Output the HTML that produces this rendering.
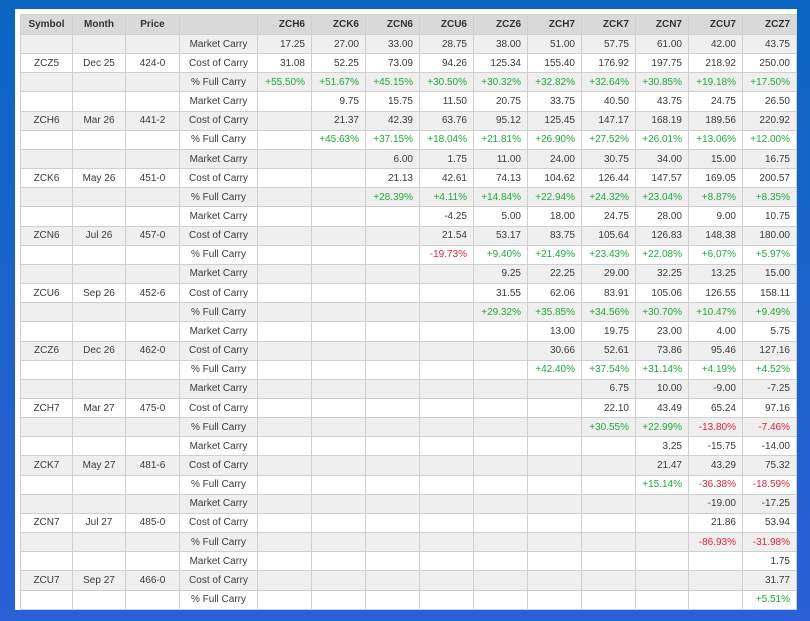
<!DOCTYPE html>
<html><head><meta charset="utf-8"><style>
html,body{margin:0;padding:0;width:810px;height:621px;overflow:hidden;background:linear-gradient(180deg,#0a66c2 0%,#1f62cc 60%,#2a5fd6 100%);font-family:"Liberation Sans",sans-serif;}
.panel{position:absolute;left:15px;top:9px;width:782px;height:601px;background:#fff;overflow:hidden;}
table{position:absolute;left:5px;top:5px;border-collapse:collapse;table-layout:fixed;font-size:10px;color:#3a3a3a;}
td,th{border:1px solid #cfcfcf;height:18.17px;padding:0 6px 0 0;text-align:right;white-space:nowrap;overflow:hidden;}
th{background:#d9d9d9;font-weight:bold;height:19px;color:#333;}
th.c,td.c{text-align:center;padding:0;}
tr:nth-child(even) td{background:#efefef;}
tr:nth-child(odd) td{background:#fff;}
.g{color:#1faa3a}.r{color:#e0233a}
</style></head><body><div class="panel"><table>
<colgroup><col style="width:52px"><col style="width:53px"><col style="width:54px"><col style="width:78px"><col style="width:54px"><col style="width:54px"><col style="width:54px"><col style="width:54px"><col style="width:54px"><col style="width:54px"><col style="width:54px"><col style="width:53px"><col style="width:54px"><col style="width:54px"></colgroup>
<tr><th class="c">Symbol</th><th class="c">Month</th><th class="c">Price</th><th></th><th>ZCH6</th><th>ZCK6</th><th>ZCN6</th><th>ZCU6</th><th>ZCZ6</th><th>ZCH7</th><th>ZCK7</th><th>ZCN7</th><th>ZCU7</th><th>ZCZ7</th></tr>
<tr><td></td><td></td><td></td><td class="c">Market Carry</td><td>17.25</td><td>27.00</td><td>33.00</td><td>28.75</td><td>38.00</td><td>51.00</td><td>57.75</td><td>61.00</td><td>42.00</td><td>43.75</td></tr>
<tr><td class="c">ZCZ5</td><td class="c">Dec 25</td><td class="c">424-0</td><td class="c">Cost of Carry</td><td>31.08</td><td>52.25</td><td>73.09</td><td>94.26</td><td>125.34</td><td>155.40</td><td>176.92</td><td>197.75</td><td>218.92</td><td>250.00</td></tr>
<tr><td></td><td></td><td></td><td class="c">% Full Carry</td><td class="g">+55.50%</td><td class="g">+51.67%</td><td class="g">+45.15%</td><td class="g">+30.50%</td><td class="g">+30.32%</td><td class="g">+32.82%</td><td class="g">+32.64%</td><td class="g">+30.85%</td><td class="g">+19.18%</td><td class="g">+17.50%</td></tr>
<tr><td></td><td></td><td></td><td class="c">Market Carry</td><td></td><td>9.75</td><td>15.75</td><td>11.50</td><td>20.75</td><td>33.75</td><td>40.50</td><td>43.75</td><td>24.75</td><td>26.50</td></tr>
<tr><td class="c">ZCH6</td><td class="c">Mar 26</td><td class="c">441-2</td><td class="c">Cost of Carry</td><td></td><td>21.37</td><td>42.39</td><td>63.76</td><td>95.12</td><td>125.45</td><td>147.17</td><td>168.19</td><td>189.56</td><td>220.92</td></tr>
<tr><td></td><td></td><td></td><td class="c">% Full Carry</td><td></td><td class="g">+45.63%</td><td class="g">+37.15%</td><td class="g">+18.04%</td><td class="g">+21.81%</td><td class="g">+26.90%</td><td class="g">+27.52%</td><td class="g">+26.01%</td><td class="g">+13.06%</td><td class="g">+12.00%</td></tr>
<tr><td></td><td></td><td></td><td class="c">Market Carry</td><td></td><td></td><td>6.00</td><td>1.75</td><td>11.00</td><td>24.00</td><td>30.75</td><td>34.00</td><td>15.00</td><td>16.75</td></tr>
<tr><td class="c">ZCK6</td><td class="c">May 26</td><td class="c">451-0</td><td class="c">Cost of Carry</td><td></td><td></td><td>21.13</td><td>42.61</td><td>74.13</td><td>104.62</td><td>126.44</td><td>147.57</td><td>169.05</td><td>200.57</td></tr>
<tr><td></td><td></td><td></td><td class="c">% Full Carry</td><td></td><td></td><td class="g">+28.39%</td><td class="g">+4.11%</td><td class="g">+14.84%</td><td class="g">+22.94%</td><td class="g">+24.32%</td><td class="g">+23.04%</td><td class="g">+8.87%</td><td class="g">+8.35%</td></tr>
<tr><td></td><td></td><td></td><td class="c">Market Carry</td><td></td><td></td><td></td><td>-4.25</td><td>5.00</td><td>18.00</td><td>24.75</td><td>28.00</td><td>9.00</td><td>10.75</td></tr>
<tr><td class="c">ZCN6</td><td class="c">Jul 26</td><td class="c">457-0</td><td class="c">Cost of Carry</td><td></td><td></td><td></td><td>21.54</td><td>53.17</td><td>83.75</td><td>105.64</td><td>126.83</td><td>148.38</td><td>180.00</td></tr>
<tr><td></td><td></td><td></td><td class="c">% Full Carry</td><td></td><td></td><td></td><td class="r">-19.73%</td><td class="g">+9.40%</td><td class="g">+21.49%</td><td class="g">+23.43%</td><td class="g">+22.08%</td><td class="g">+6.07%</td><td class="g">+5.97%</td></tr>
<tr><td></td><td></td><td></td><td class="c">Market Carry</td><td></td><td></td><td></td><td></td><td>9.25</td><td>22.25</td><td>29.00</td><td>32.25</td><td>13.25</td><td>15.00</td></tr>
<tr><td class="c">ZCU6</td><td class="c">Sep 26</td><td class="c">452-6</td><td class="c">Cost of Carry</td><td></td><td></td><td></td><td></td><td>31.55</td><td>62.06</td><td>83.91</td><td>105.06</td><td>126.55</td><td>158.11</td></tr>
<tr><td></td><td></td><td></td><td class="c">% Full Carry</td><td></td><td></td><td></td><td></td><td class="g">+29.32%</td><td class="g">+35.85%</td><td class="g">+34.56%</td><td class="g">+30.70%</td><td class="g">+10.47%</td><td class="g">+9.49%</td></tr>
<tr><td></td><td></td><td></td><td class="c">Market Carry</td><td></td><td></td><td></td><td></td><td></td><td>13.00</td><td>19.75</td><td>23.00</td><td>4.00</td><td>5.75</td></tr>
<tr><td class="c">ZCZ6</td><td class="c">Dec 26</td><td class="c">462-0</td><td class="c">Cost of Carry</td><td></td><td></td><td></td><td></td><td></td><td>30.66</td><td>52.61</td><td>73.86</td><td>95.46</td><td>127.16</td></tr>
<tr><td></td><td></td><td></td><td class="c">% Full Carry</td><td></td><td></td><td></td><td></td><td></td><td class="g">+42.40%</td><td class="g">+37.54%</td><td class="g">+31.14%</td><td class="g">+4.19%</td><td class="g">+4.52%</td></tr>
<tr><td></td><td></td><td></td><td class="c">Market Carry</td><td></td><td></td><td></td><td></td><td></td><td></td><td>6.75</td><td>10.00</td><td>-9.00</td><td>-7.25</td></tr>
<tr><td class="c">ZCH7</td><td class="c">Mar 27</td><td class="c">475-0</td><td class="c">Cost of Carry</td><td></td><td></td><td></td><td></td><td></td><td></td><td>22.10</td><td>43.49</td><td>65.24</td><td>97.16</td></tr>
<tr><td></td><td></td><td></td><td class="c">% Full Carry</td><td></td><td></td><td></td><td></td><td></td><td></td><td class="g">+30.55%</td><td class="g">+22.99%</td><td class="r">-13.80%</td><td class="r">-7.46%</td></tr>
<tr><td></td><td></td><td></td><td class="c">Market Carry</td><td></td><td></td><td></td><td></td><td></td><td></td><td></td><td>3.25</td><td>-15.75</td><td>-14.00</td></tr>
<tr><td class="c">ZCK7</td><td class="c">May 27</td><td class="c">481-6</td><td class="c">Cost of Carry</td><td></td><td></td><td></td><td></td><td></td><td></td><td></td><td>21.47</td><td>43.29</td><td>75.32</td></tr>
<tr><td></td><td></td><td></td><td class="c">% Full Carry</td><td></td><td></td><td></td><td></td><td></td><td></td><td></td><td class="g">+15.14%</td><td class="r">-36.38%</td><td class="r">-18.59%</td></tr>
<tr><td></td><td></td><td></td><td class="c">Market Carry</td><td></td><td></td><td></td><td></td><td></td><td></td><td></td><td></td><td>-19.00</td><td>-17.25</td></tr>
<tr><td class="c">ZCN7</td><td class="c">Jul 27</td><td class="c">485-0</td><td class="c">Cost of Carry</td><td></td><td></td><td></td><td></td><td></td><td></td><td></td><td></td><td>21.86</td><td>53.94</td></tr>
<tr><td></td><td></td><td></td><td class="c">% Full Carry</td><td></td><td></td><td></td><td></td><td></td><td></td><td></td><td></td><td class="r">-86.93%</td><td class="r">-31.98%</td></tr>
<tr><td></td><td></td><td></td><td class="c">Market Carry</td><td></td><td></td><td></td><td></td><td></td><td></td><td></td><td></td><td></td><td>1.75</td></tr>
<tr><td class="c">ZCU7</td><td class="c">Sep 27</td><td class="c">466-0</td><td class="c">Cost of Carry</td><td></td><td></td><td></td><td></td><td></td><td></td><td></td><td></td><td></td><td>31.77</td></tr>
<tr><td></td><td></td><td></td><td class="c">% Full Carry</td><td></td><td></td><td></td><td></td><td></td><td></td><td></td><td></td><td></td><td class="g">+5.51%</td></tr>
</table></div></body></html>
